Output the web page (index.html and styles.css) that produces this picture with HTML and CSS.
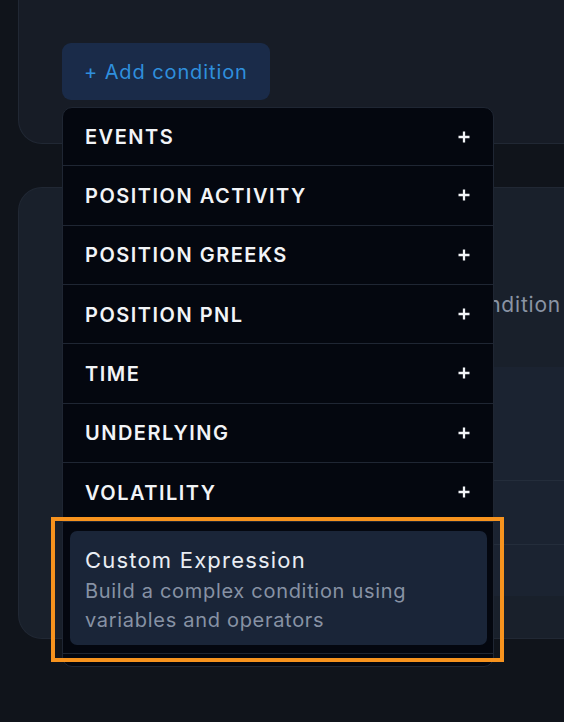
FILE: index.html
```html
<!DOCTYPE html>
<html>
<head>
<meta charset="utf-8">
<link rel="stylesheet" href="styles.css">
</head>
<body>
<div class="page">
  <section class="card card-top">
    <button class="add-btn">+ Add condition</button>
  </section>

  <section class="card card-bottom">
    <p class="empty-text">Add your first condition</p>
    <div class="table">
      <div class="table-row row-a"></div>
      <div class="table-row row-b"></div>
      <div class="table-row row-c"></div>
    </div>
  </section>

  <div class="dropdown">
    <div class="dd-row"><span class="dd-label">EVENTS</span><svg class="plus" viewBox="0 0 14 14"><path d="M7 1.5v11M1.5 7h11"/></svg></div>
    <div class="dd-row"><span class="dd-label">POSITION ACTIVITY</span><svg class="plus" viewBox="0 0 14 14"><path d="M7 1.5v11M1.5 7h11"/></svg></div>
    <div class="dd-row"><span class="dd-label">POSITION GREEKS</span><svg class="plus" viewBox="0 0 14 14"><path d="M7 1.5v11M1.5 7h11"/></svg></div>
    <div class="dd-row"><span class="dd-label">POSITION PNL</span><svg class="plus" viewBox="0 0 14 14"><path d="M7 1.5v11M1.5 7h11"/></svg></div>
    <div class="dd-row"><span class="dd-label">TIME</span><svg class="plus" viewBox="0 0 14 14"><path d="M7 1.5v11M1.5 7h11"/></svg></div>
    <div class="dd-row"><span class="dd-label">UNDERLYING</span><svg class="plus" viewBox="0 0 14 14"><path d="M7 1.5v11M1.5 7h11"/></svg></div>
    <div class="dd-row"><span class="dd-label">VOLATILITY</span><svg class="plus" viewBox="0 0 14 14"><path d="M7 1.5v11M1.5 7h11"/></svg></div>
    <div class="custom-wrap">
      <div class="custom-card">
        <div class="custom-title">Custom Expression</div>
        <div class="custom-desc">Build a complex condition using variables and operators</div>
      </div>
    </div>
    <div class="dd-tail"></div>
  </div>

  <div class="highlight"></div>
</div>
</body>
</html>
```

FILE: styles.css
```css
* { box-sizing: border-box; }

html, body {
  margin: 0;
  padding: 0;
  width: 564px;
  height: 722px;
  overflow: hidden;
  background: #10141b;
  font-family: Inter, "Noto Sans", sans-serif;
}

.page {
  position: relative;
  display: flow-root;
  width: 564px;
  height: 722px;
  padding-left: 18px;
  overflow: hidden;
}

.card {
  width: 546px;
  background: #171c26;
  border: 1px solid #212834;
  border-right: none;
  border-radius: 24px 0 0 24px;
}

.card-top {
  margin-top: -40px;
  height: 184px;
  padding: 82px 0 0 43px;
}

.add-btn {
  display: block;
  height: 57px;
  width: 208px;
  padding: 0 0 0 22px;
  text-align: left;
  border: none;
  border-radius: 9px;
  background: #1a2b49;
  color: #2f8fdd;
  font-family: Inter, "Noto Sans", sans-serif;
  font-size: 20px;
  font-weight: 400;
  letter-spacing: 0.9px;
}

.card-bottom {
  margin-top: 43px;
  height: 452px;
  padding: 103px 0 0 0;
  background: #19202b;
}

.empty-text {
  margin: 0;
  padding-left: 290px;
  font-size: 21px;
  line-height: 28px;
  letter-spacing: 0.8px;
  color: #8a94a4;
  white-space: nowrap;
  overflow: hidden;
}

.table {
  margin: 48px 0 0 43px;
  background: #1b2331;
}

.table-row { border-bottom: 1px solid #242d3b; }
.row-a { height: 114px; }
.row-b { height: 64px; }
.row-c { height: 51px; border-bottom: none; }

.dropdown {
  position: absolute;
  left: 62px;
  top: 107px;
  width: 432px;
  background: #04070f;
  border: 1px solid #1f2633;
  border-radius: 10px;
  overflow: hidden;
}

.dd-row {
  display: flex;
  align-items: center;
  justify-content: space-between;
  height: 59.33px;
  padding: 0 22px 0 22px;
  border-bottom: 1px solid #1f2633;
}

.dd-row:first-child { height: 58.33px; }

.dd-label {
  color: #f2f4f7;
  font-size: 20px;
  font-weight: 600;
  letter-spacing: 1.5px;
  padding-top: 1px;
}

.plus {
  width: 14px;
  height: 14px;
  stroke: #f2f4f7;
  stroke-width: 2.3;
  fill: none;
}

.custom-wrap {
  padding: 9px 6px 0 7px;
}

.custom-card {
  background: #1a2538;
  border-radius: 7px;
  padding: 14px 15px 10px 15px;
  height: 114px;
}

.custom-title {
  color: #e9edf3;
  font-size: 22px;
  line-height: 30px;
  letter-spacing: 1.2px;
  margin-bottom: 2px;
}

.custom-desc {
  color: #8792a4;
  font-size: 20px;
  line-height: 28.5px;
  letter-spacing: 0.7px;
  width: 360px;
}

.dd-tail {
  margin-top: 8px;
  height: 13px;
  border-top: 1px solid #1f2633;
}

.highlight {
  position: absolute;
  left: 51px;
  top: 517px;
  width: 453px;
  height: 145px;
  border: 4px solid #f7931e;
}
```
